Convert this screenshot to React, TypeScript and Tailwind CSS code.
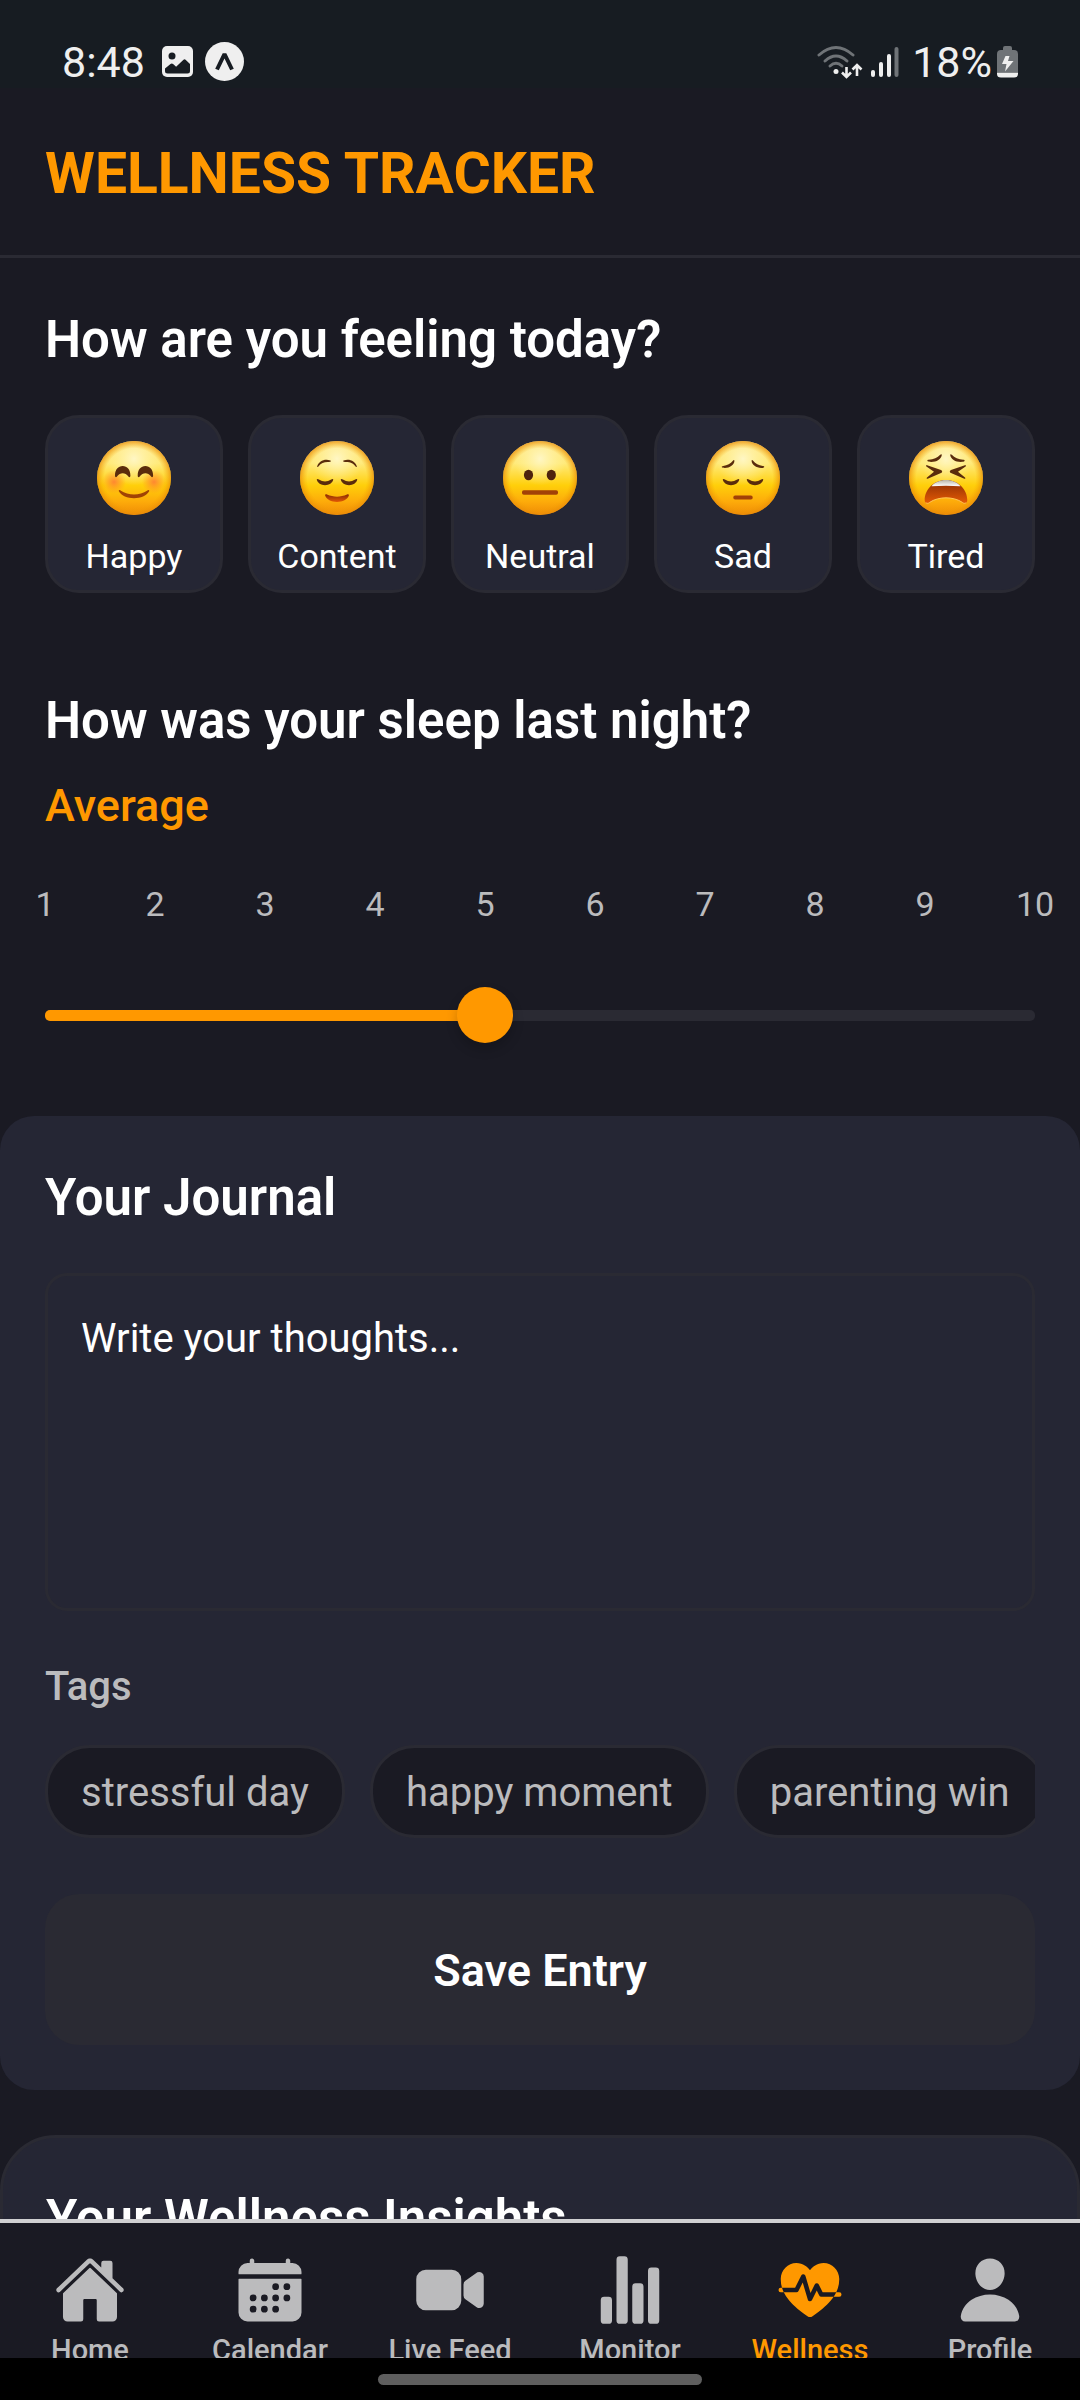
import { useState } from "react";
import type { ReactNode } from "react";
import {
  IoCalendar,
  IoFitness,
  IoHome,
  IoPerson,
  IoStatsChart,
  IoVideocam,
} from "react-icons/io5";

const INK = "#5a2c0c";

function Face({ children }: { children: ReactNode }) {
  return (
    <svg viewBox="0 0 74 74" className="size-[74px]" aria-hidden="true">
      <defs>
        <linearGradient id="face-base" x1="0" y1="0" x2="0" y2="1">
          <stop offset="0" stopColor="#ffe789" />
          <stop offset="0.3" stopColor="#ffea7a" />
          <stop offset="0.6" stopColor="#ffcf0a" />
          <stop offset="0.82" stopColor="#fdab0a" />
          <stop offset="1" stopColor="#f08a06" />
        </linearGradient>
        <radialGradient id="face-glow" cx="0.5" cy="0.24" r="0.36">
          <stop offset="0" stopColor="#fff7c8" stopOpacity="0.95" />
          <stop offset="1" stopColor="#fff3a0" stopOpacity="0" />
        </radialGradient>
        <radialGradient id="face-rim" cx="0.5" cy="0.5" r="0.5">
          <stop offset="0.8" stopColor="#f5a400" stopOpacity="0" />
          <stop offset="1" stopColor="#e88b0a" stopOpacity="0.75" />
        </radialGradient>
        <radialGradient id="face-blush">
          <stop offset="0" stopColor="#ff7a35" stopOpacity="0.85" />
          <stop offset="1" stopColor="#ff8a2e" stopOpacity="0" />
        </radialGradient>
        <linearGradient id="face-mouth" x1="0" y1="0" x2="0" y2="1">
          <stop offset="0" stopColor="#8a2c05" />
          <stop offset="1" stopColor="#e45a04" />
        </linearGradient>
        <linearGradient id="face-teeth" x1="0" y1="0" x2="0" y2="1">
          <stop offset="0" stopColor="#b9b4a6" />
          <stop offset="1" stopColor="#ffffff" />
        </linearGradient>
      </defs>
      <circle cx="37" cy="37" r="37" fill="url(#face-base)" />
      <circle cx="37" cy="37" r="37" fill="url(#face-glow)" />
      <circle cx="37" cy="37" r="37" fill="url(#face-rim)" />
      {children}
    </svg>
  );
}

function ClosedEyes() {
  return (
    <g fill={INK}>
      <path d="M16.700 38.600c.2-.9 1.300-.9 2.200-.1 4 2.600 8.200 2.600 12.300 0 .9-.8 2-.7 2.100.1-.9 3.600-4.200 5.600-8.300 5.600s-7.300-2-8.300-5.600z" />
      <path d="M40.700 38.600c.2-.9 1.300-.9 2.200-.1 4 2.600 8.200 2.600 12.300 0 .9-.8 2-.7 2.100.1-.9 3.600-4.200 5.600-8.300 5.600s-7.300-2-8.300-5.600z" />
    </g>
  );
}

const moods = [
  {
    label: "Happy",
    face: (
      <Face>
        <circle cx="17" cy="41" r="12" fill="url(#face-blush)" />
        <circle cx="57" cy="41" r="12" fill="url(#face-blush)" />
        <g fill={INK}>
          <path d="M18 34.500C18 28.500 21.300 25 25.700 25s7.700 3.500 7.700 9.500c0 1.900-1.200 2.300-2.200.8-2.800-4-8.200-4-11 0-1 1.500-2.200 1.100-2.200-.8z" />
          <path d="M40.700 34.500c0-6 3.300-9.500 7.700-9.500s7.700 3.500 7.700 9.500c0 1.900-1.200 2.300-2.200.8-2.800-4-8.200-4-11 0-1 1.500-2.200 1.100-2.200-.8z" />
        </g>
        <path d="M21.700 50c0-1 1-1.200 1.800-.6 8.300 5.300 18.700 5.300 27 0 .8-.6 1.800-.4 1.800.6C49.500 54.800 43.500 57.200 37 57.200S24.500 54.800 21.700 50z" fill="#a04305" />
      </Face>
    ),
  },
  {
    label: "Content",
    face: (
      <Face>
        <g fill={INK}>
          <path d="M17.200 25.300c1.300-4.200 5.100-6.600 9.500-6.500 2 .1 4 .6 4.200 1.300.1.800-1.300 1-3.200 1-4 0-6.500 1-9.300 4.300-.7.800-1.400.7-1.200-.1z" />
          <path d="M56.800 25.300c-1.300-4.200-5.100-6.600-9.500-6.500-2 .1-4 .6-4.200 1.300-.1.800 1.300 1 3.200 1 4 0 6.500 1 9.300 4.300.7.800 1.400.7 1.200-.1z" />
        </g>
        <ClosedEyes />
        <path d="M25.100 54.600c0-1.300.9-1.500 1.900-1 6.500 2.800 13.500 2.800 20 0 1-.5 1.900-.3 1.900 1-1.500 4.200-6.200 6.400-11.900 6.400s-10.400-2.200-11.900-6.400z" fill="url(#face-mouth)" />
      </Face>
    ),
  },
  {
    label: "Neutral",
    face: (
      <Face>
        <ellipse cx="25.500" cy="34" rx="4.600" ry="5.300" fill="#4e230e" />
        <ellipse cx="48.300" cy="34" rx="4.600" ry="5.300" fill="#4e230e" />
        <rect x="19" y="49.300" width="36" height="4.400" rx="1.800" fill="#a24107" />
      </Face>
    ),
  },
  {
    label: "Sad",
    face: (
      <Face>
        <g fill={INK}>
          <path d="M15.900 26.300c-.5-.8.300-1 1.300-1.200 4.200-.9 7.300-2.600 9.700-5.400.7-.9 1.500-1 1.500 0 .1 4-4.700 7.200-9.600 7.200-1.300 0-2.500-.1-2.900-.6z" />
          <path d="M58.100 26.300c.5-.8-.3-1-1.300-1.200-4.200-.9-7.300-2.600-9.700-5.400-.7-.9-1.500-1-1.500 0-.1 4 4.700 7.200 9.600 7.200 1.300 0 2.500-.1 2.900-.6z" />
        </g>
        <ClosedEyes />
        <rect x="27.300" y="54.600" width="19.400" height="4" rx="1.800" fill="#a24107" />
      </Face>
    ),
  },
  {
    label: "Tired",
    face: (
      <Face>
        <g fill={INK}>
          <path d="M18.500 20c-.5-.8.300-1.100 1.300-1.200 4.700-.3 8.700-2 11.400-5 .8-.9 1.700-.9 1.600.1-.5 4.200-5.200 7-10.600 7-1.800 0-3.300-.3-3.700-.9z" />
          <path d="M55.500 20c.5-.8-.3-1.100-1.300-1.200-4.700-.3-8.700-2-11.400-5-.8-.9-1.700-.9-1.600.1.500 4.200 5.200 7 10.600 7 1.800 0 3.300-.3 3.700-.9z" />
          <path d="M18.100 24.200 32 28.900c1.600.6 1.600 2.400 0 3.100l-13.300 5.700c-1 .3-1.400-.5-.7-1.200l7-5.800-7.600-5.300c-.8-.7-.4-1.500.7-1.200z" />
          <path d="M55.900 24.200 42 28.900c-1.600.6-1.600 2.400 0 3.100l13.300 5.700c1 .3 1.400-.5.7-1.200l-7-5.800 7.600-5.300c.8-.7.4-1.500-.7-1.200z" />
        </g>
        <path d="M37 39c12 0 21.300 9.500 21.300 20.200 0 3-2.300 4-4.900 2.200-9-6.100-23.800-6.100-32.800 0-2.600 1.800-4.900.8-4.900-2.200C15.700 48.500 25 39 37 39z" fill="url(#face-mouth)" />
        <path d="M37 39c6.200 0 11.200 2.300 14.500 6.200-9.300-.7-19.700-.7-29 0C25.800 41.300 30.800 39 37 39z" fill="url(#face-teeth)" />
        <path d="M17 61.800c.9.900 2.300.7 3.600-.4 9-6.100 23.800-6.100 32.800 0 1.300 1.100 2.700 1.300 3.600.4" fill="none" stroke="#ffc65a" strokeWidth="1" strokeLinecap="round" />
      </Face>
    ),
  },
];

const tags = ["stressful day", "happy moment", "parenting win"];

const tabs = [
  { label: "Home", Icon: IoHome },
  { label: "Calendar", Icon: IoCalendar },
  { label: "Live Feed", Icon: IoVideocam },
  { label: "Monitor", Icon: IoStatsChart },
  { label: "Wellness", Icon: IoFitness },
  { label: "Profile", Icon: IoPerson },
];

function sleepWord(value: number) {
  if (value < 4) return "Poor";
  if (value < 7) return "Average";
  return "Great";
}

function StatusBar() {
  return (
    <div className="flex h-[88px] shrink-0 items-center justify-between bg-[#171c22] pt-[35px] pr-[62px] pl-[62px] text-[43px] leading-[52px] text-[#efefef]">
      <div className="flex items-center">
        <span className="w-[100px]">8:48</span>
        <svg viewBox="0 0 31 31" className="mr-3 size-[31px]" aria-hidden="true">
          <rect width="31" height="31" rx="5" fill="#efefef" />
          <circle cx="10" cy="10" r="3.500" fill="#171c22" />
          <path d="M3 22.500 8.500 18q1.300-1 2.600 0l3 2.700 7.400-7q1-1 2.100 0L28 18v7q0 2.500-2.500 2.500h-20Q3 27.500 3 25z" fill="#171c22" />
        </svg>
        <svg viewBox="0 0 39 39" className="size-[39px]" aria-hidden="true">
          <circle cx="19.500" cy="19.500" r="19.500" fill="#efefef" />
          <path d="M12 27.500 19.500 12 27 27.500" fill="none" stroke="#171c22" strokeWidth="4" strokeLinejoin="bevel" />
        </svg>
      </div>
      <div className="flex items-center">
        <svg viewBox="0 0 46 34" className="mr-2 h-[34px] w-[46px]" aria-hidden="true">
          <g fill="none" stroke="#6f7377" strokeWidth="3" strokeLinecap="round">
            <path d="M2 10q17-15 34 0" />
            <path d="M8 16q11-10 22 0" />
            <path d="M13 21q6-5.500 12 0" />
          </g>
          <circle cx="19" cy="26.500" r="2.500" fill="#efefef" />
          <g fill="none" stroke="#efefef" strokeWidth="2.600">
            <path d="M29.500 22v10M25 27.500l4.500 4.500 4.500-4.500" />
            <path d="M40 31V20M35.500 24.500l4.500-4.500 4.500 4.500" />
          </g>
        </svg>
        <svg viewBox="0 0 28 30" className="mr-[13px] h-[30px] w-7" aria-hidden="true">
          <rect x="0" y="23" width="4" height="7" rx="2" fill="#efefef" />
          <rect x="8" y="15" width="4" height="15" rx="2" fill="#efefef" />
          <rect x="16" y="7" width="4" height="23" rx="2" fill="#efefef" />
          <rect x="23.500" y="0" width="4" height="30" rx="2" fill="#6f7377" />
        </svg>
        <span className="mr-[5px]">18%</span>
        <svg viewBox="0 0 21 32" className="h-8 w-[21px]" aria-hidden="true">
          <path d="M6 4V2q0-2 2-2h5q2 0 2 2v2h2q4 0 4 4v18H0V8q0-4 4-4z" fill="#6f7377" />
          <path d="M0 26.500h21v1.500q0 3.500-4 3.500H4q-4 0-4-3.500z" fill="#efefef" />
          <path d="M8.500 10h4l-1.500 5h5.500L8 25.500l1.500-7.500H5z" fill="#efefef" />
        </svg>
      </div>
    </div>
  );
}

export default function App() {
  const [mood, setMood] = useState("");
  const [sleep, setSleep] = useState(5);
  const [tag, setTag] = useState("");

  return (
    <div className="flex h-screen flex-col overflow-hidden bg-[#1a1a23] font-[Roboto,sans-serif] text-white">
      <StatusBar />
      <header className="shrink-0 border-b-[3px] border-[#2a2a33] px-[45px] pt-[55px] pb-[51px]">
        <h1 className="text-[57px] leading-[61px] font-bold text-[#ff9800]">WELLNESS TRACKER</h1>
      </header>

      <main className="min-h-0 flex-1 overflow-y-auto [scrollbar-width:none]">
        <section className="px-[45px] pt-[52px]">
          <h2 className="text-[51px] leading-[60px] font-semibold">How are you feeling today?</h2>
          <div className="mt-[45px] flex gap-[25px]">
            {moods.map(({ label, face }) => (
              <button
                key={label}
                type="button"
                aria-pressed={mood === label}
                onClick={() => setMood(label)}
                className="flex flex-1 flex-col items-center rounded-[34px] border-[3px] border-[#2a2a33] bg-[#252634] pt-[23px] pb-[14px]"
              >
                {face}
                <span className="mt-[21px] text-[34px] leading-10">{label}</span>
              </button>
            ))}
          </div>
        </section>

        <section className="px-[45px] pt-[98px]">
          <h2 className="text-[51px] leading-[60px] font-semibold">
            <label htmlFor="sleep">How was your sleep last night?</label>
          </h2>
          <p className="mt-[29px] text-[45px] leading-[52px] font-medium text-[#ff9800]">{sleepWord(sleep)}</p>
          <div className="mt-[52px] flex justify-between text-[34px] leading-10 text-[#bbbbbd]">
            {[1, 2, 3, 4, 5, 6, 7, 8, 9, 10].map((n) => (
              <span key={n} className="flex w-0 justify-center">
                {n}
              </span>
            ))}
          </div>
          <div className="relative mt-[63px] flex h-14 items-center">
            <div className="h-[11px] w-full overflow-hidden rounded-[5px] bg-[#2a2a33]">
              <div className="h-full bg-[#ff9800]" style={{ width: `${((sleep - 1) / 9) * 100}%` }} />
            </div>
            <input
              id="sleep"
              type="range"
              min={1}
              max={10}
              value={sleep}
              onChange={(e) => setSleep(Number(e.target.value))}
              className="absolute inset-y-0 -left-7 w-[calc(100%+56px)] appearance-none bg-transparent [&::-webkit-slider-thumb]:size-14 [&::-webkit-slider-thumb]:appearance-none [&::-webkit-slider-thumb]:rounded-full [&::-webkit-slider-thumb]:bg-[#ff9800] [&::-webkit-slider-thumb]:shadow-[0_6px_12px_rgba(0,0,0,0.2)]"
            />
          </div>
        </section>

        <section className="mt-[73px] rounded-[34px] bg-[#252634] px-[45px] pt-[52px] pb-[45px]">
          <h2 className="text-[51px] leading-[60px] font-semibold">
            <label htmlFor="journal">Your Journal</label>
          </h2>
          <textarea
            id="journal"
            placeholder="Write your thoughts..."
            className="mt-[45px] block h-[338px] w-full resize-none rounded-[22px] border-[3px] border-[#2a2a33] bg-transparent px-[33px] py-[39px] text-[40px] leading-[48px] placeholder:text-white"
          />
          <h3 className="mt-[52px] text-[40px] leading-[48px] font-medium text-[#bbbbbd]">Tags</h3>
          <div className="mt-[34px] flex gap-[25px] overflow-x-auto [scrollbar-width:none]">
            {tags.map((name) => (
              <button
                key={name}
                type="button"
                aria-pressed={tag === name}
                onClick={() => setTag(name)}
                className="shrink-0 rounded-[45px] border-[3px] border-[#2a2a33] bg-[#1a1a23] px-[33px] pt-[21px] pb-[19px] text-[40px] leading-[47px] text-[#bbbbbd]"
              >
                {name}
              </button>
            ))}
          </div>
          <button
            type="button"
            className="mt-14 block w-full rounded-[34px] bg-[#2a2a33] pt-[50px] pb-12 text-[45px] leading-[53px] font-semibold"
          >
            Save Entry
          </button>
        </section>

        <section className="mt-[45px] rounded-[56px] border-[3px] border-[#2a2a33] bg-[#252634] px-[43px] pt-[51px] pb-14">
          <h2 className="text-[51px] leading-[60px] font-semibold">Your Wellness Insights</h2>
        </section>
      </main>

      <nav className="h-[139px] shrink-0 overflow-hidden border-t-4 border-[#d0d0d2] bg-[#1a1a23] pt-[31px]">
        <div className="flex">
          {tabs.map(({ label, Icon }) => (
            <a
              key={label}
              href={`#${label.toLowerCase().replace(" ", "-")}`}
              aria-current={label === "Wellness" ? "page" : undefined}
              className="flex flex-1 flex-col items-center text-[29px] leading-8 font-medium text-[#bbbbbd] aria-[current=page]:text-[#ff9800]"
            >
              <Icon className="mb-2 size-[72px]" aria-hidden="true" />
              {label}
            </a>
          ))}
        </div>
      </nav>
      <div className="flex h-[42px] shrink-0 justify-center bg-black pt-4">
        <div className="h-[11px] w-[30%] rounded-full bg-[#5e5e5e]" />
      </div>
    </div>
  );
}
